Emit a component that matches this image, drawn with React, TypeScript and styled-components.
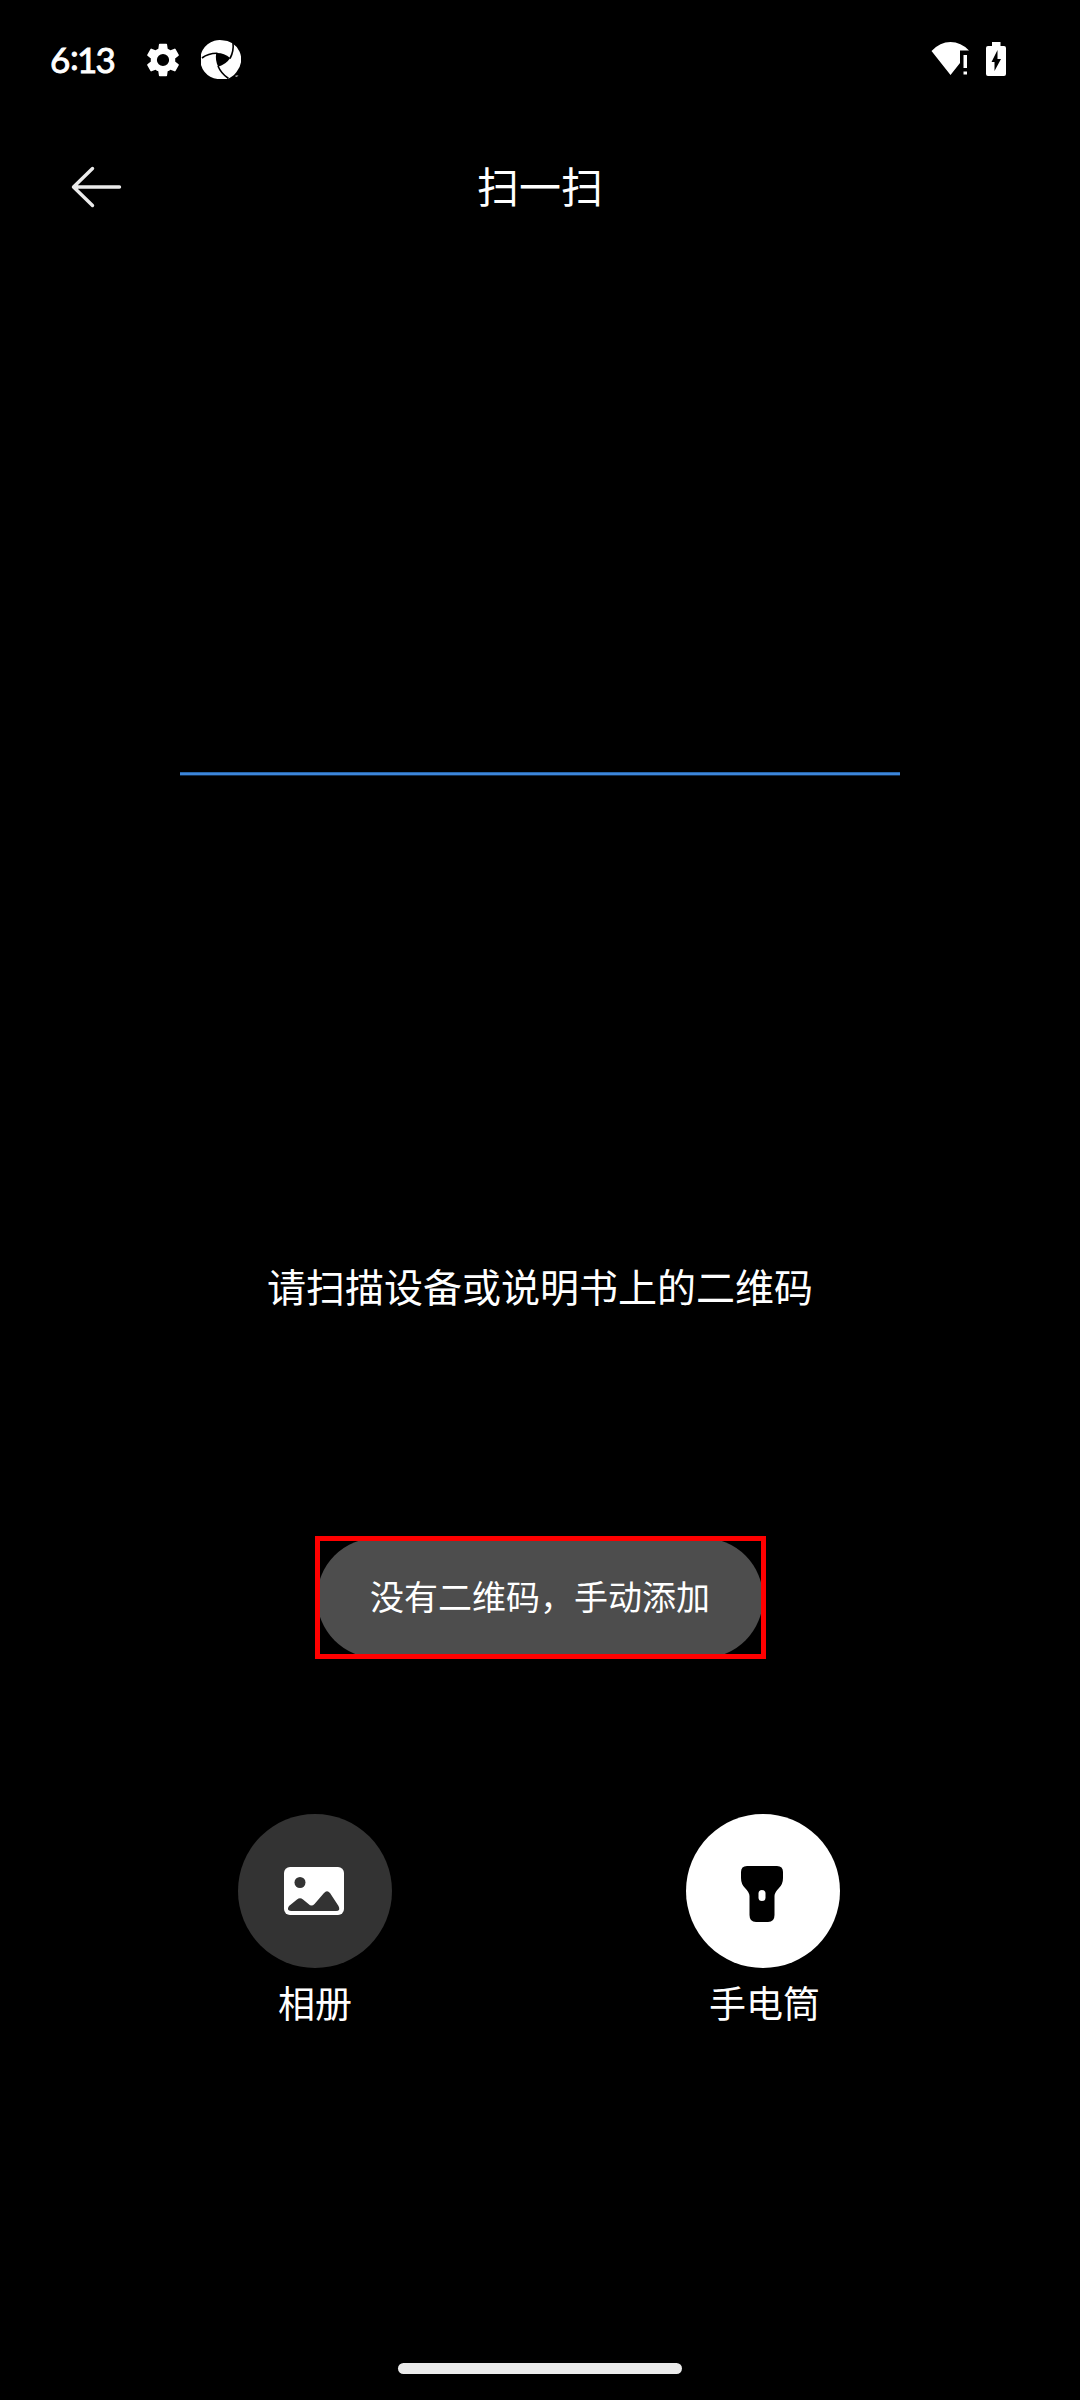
import React from "react";
import styled, { createGlobalStyle } from "styled-components";

const GlobalStyle = createGlobalStyle`
  * { box-sizing: border-box; }
  body { margin: 0; background: #000; }
`;

const Screen = styled.main`
  width: 1080px;
  height: 2400px;
  display: flex;
  flex-direction: column;
  align-items: center;
  background: #000;
  color: #fff;
  overflow: hidden;
  font-family: "Noto Sans CJK SC", sans-serif;
`;

const StatusBar = styled.div`
  width: 100%;
  height: 120px;
  flex: none;
  padding: 0 73px 0 50px;
  display: flex;
  justify-content: space-between;
`;

const StatusGroup = styled.div<{ $gap: number; $height: number }>`
  display: flex;
  align-items: center;
  height: ${(p) => p.$height}px;
  gap: ${(p) => p.$gap}px;
`;

const Clock = styled.time`
  display: flex;
  width: 75px;
  padding-bottom: 2px;
  font: 400 35px/40px Lato, sans-serif;
  letter-spacing: -1.8px;
  -webkit-text-stroke: 0.9px #fff;
`;

const Colon = styled.span`
  margin: -3px 0 0 1.5px;
`;

const Header = styled.header`
  width: 100%;
  height: 132px;
  flex: none;
  display: grid;
  grid-template-columns: 71px 1fr 71px;
  align-items: center;
`;

const BackButton = styled.button`
  width: 52px;
  height: 42px;
  margin: 1px 0 0 71px;
  padding: 0;
  border: 0;
  background: none;
`;

const Title = styled.h1`
  margin: 0;
  padding-bottom: 2px;
  font-size: 42px;
  font-weight: 400;
  line-height: 60px;
  text-align: center;
`;

const ScanArea = styled.section`
  width: 720px;
  flex: none;
  display: flex;
  flex-direction: column;
  align-items: center;
`;

const ScanLine = styled.div`
  width: 720px;
  height: 4px;
  margin-top: 520px;
  background: linear-gradient(#2765a8 0 1px, #3d86da 1px 3px, #122f50 3px 4px);
`;

const Hint = styled.p`
  margin: 481px 0 0;
  font-size: 39px;
  line-height: 56px;
  white-space: nowrap;
`;

const Highlight = styled.div`
  width: 451px;
  height: 123px;
  flex: none;
  margin-top: 223px;
  border: 5px solid #f00;
  display: flex;
  align-items: center;
  justify-content: center;
  overflow: hidden;
`;

const ManualButton = styled.button`
  flex: none;
  width: 446px;
  height: 120px;
  padding: 0 0 4px;
  border: 0;
  border-radius: 60px;
  background: #4d4d4d;
  color: #fff;
  font: 400 34px/50px "Noto Sans CJK SC", sans-serif;
`;

const Actions = styled.div`
  display: flex;
  gap: 248px;
  margin: 155px 2px 0 0;
`;

const Action = styled.div`
  width: 200px;
  display: flex;
  flex-direction: column;
  align-items: center;
`;

const Disc = styled.div<{ $color: string; $pad?: string }>`
  width: 154px;
  height: 154px;
  padding: ${(p) => p.$pad ?? "0"};
  border-radius: 50%;
  display: flex;
  align-items: center;
  justify-content: center;
  background: ${(p) => p.$color};
`;

const Label = styled.span<{ $indent?: number }>`
  margin-top: 7px;
  padding-left: ${(p) => p.$indent ?? 0}px;
  font-size: 37px;
  line-height: 54px;
`;

const HomeBar = styled.div`
  width: 284px;
  height: 11px;
  flex: none;
  margin-top: auto;
  margin-bottom: 26px;
  border-radius: 6px;
  background: #ebebeb;
`;

const GearIcon = () => (
  <svg width="34" height="34" viewBox="2.2 2 19.6 20" fill="#fff">
    <path d="M19.14 12.94c.04-.3.06-.61.06-.94 0-.32-.02-.64-.07-.94l2.03-1.58a.49.49 0 0 0 .12-.61l-1.92-3.32a.49.49 0 0 0-.59-.22l-2.39.96c-.5-.38-1.03-.7-1.62-.94l-.36-2.54a.48.48 0 0 0-.48-.41h-3.84c-.24 0-.43.17-.47.41l-.36 2.54c-.59.24-1.13.57-1.62.94l-2.39-.96a.48.48 0 0 0-.59.22L2.74 8.87c-.12.21-.08.47.12.61l2.03 1.58c-.05.3-.09.63-.09.94s.02.64.07.94l-2.03 1.58a.49.49 0 0 0-.12.61l1.92 3.32c.12.22.37.29.59.22l2.39-.96c.5.38 1.03.7 1.62.94l.36 2.54c.05.24.24.41.48.41h3.84c.24 0 .44-.17.47-.41l.36-2.54c.59-.24 1.13-.56 1.62-.94l2.39.96c.22.08.47 0 .59-.22l1.92-3.32a.48.48 0 0 0-.12-.61zM12 15.6A3.6 3.6 0 1 1 12 8.4a3.6 3.6 0 0 1 0 7.2z" />
  </svg>
);

const ShutterIcon = () => (
  <svg width="40" height="40" viewBox="-1.5 0 40 40">
    <path d="M19.500.2A19.200 19.200 0 0 1 34 32Q32 35 29 36.800L25.500 39H15A19.200 19.200 0 0 1 19.500.2Z" fill="#fff" />
    <path d="M13.700 13Q21 12.500 27.700 18Q23.500 24.500 15.700 26.700Q12.500 20.500 13.700 13Z" fill="#000" />
    <path d="M-.5 18Q6 13 15 13.200M30.500 3Q31.500 11 27.500 18.500M15.500 26Q18.500 33.500 26 38.500" fill="none" stroke="#000" strokeWidth="1.600" />
    <path d="M33 35.500H36L34.500 36.800H33Z" fill="#ccc" />
  </svg>
);

const WifiIcon = () => (
  <svg width="39" height="34" viewBox="0 0 39 34" fill="#fff">
    <path d="M.5 9Q9 0 19.500 0T38 8.500H29V21L19.500 33Z" />
    <path d="M32.500 13H36V26H32.500ZM32.500 29.500H36V32.500H32.500Z" />
  </svg>
);

const BatteryIcon = () => (
  <svg width="21" height="34" viewBox="0 0 21 34">
    <path d="M6 0H14.500V4H18Q20 4 20 6V32Q20 34 18 34H2Q0 34 0 32V6Q0 4 2 4H6Z" fill="#fff" />
    <path d="M11.500 8V17H15L8.500 29V20H5.500Z" fill="#000" />
  </svg>
);

const ArrowIcon = () => (
  <svg width="52" height="42" viewBox="0 0 52 42" fill="none" stroke="#ebebeb" strokeWidth="3.4" strokeLinecap="round" strokeLinejoin="round">
    <path d="M21.500 2.500L2.500 21L21.500 39.500M3 21H48.500" />
  </svg>
);

const PhotoIcon = () => (
  <svg width="60" height="48" viewBox="0 0 60 48">
    <rect width="60" height="48" rx="6" fill="#fff" />
    <circle cx="16" cy="15.500" r="5.500" fill="#333" />
    <path d="M5 39L13 32.500Q16 30 19 32.500L24.500 37Q27.500 40 30.500 37L40 26Q43 22.500 46 26L54.500 39Q57 44 52 44H7Q2 43.500 5 39Z" fill="#333" />
  </svg>
);

const TorchIcon = () => (
  <svg width="42" height="56" viewBox="0 0 42 56">
    <path d="M6 0H36Q42 0 42 6V12Q42 18 38 22Q33.500 26.500 33.500 30V49Q33.500 56 27 56H15Q8.500 56 8.500 49V30Q8.500 26.500 4 22Q0 18 0 12V6Q0 0 6 0Z" fill="#000" />
    <rect x="17.500" y="24" width="7" height="11" rx="3.500" fill="#fff" />
  </svg>
);

export default function App() {
  return (
    <Screen>
      <GlobalStyle />
      <StatusBar>
        <StatusGroup $gap={21} $height={120}>
          <Clock>6<Colon>:</Colon>13</Clock>
          <GearIcon />
          <ShutterIcon />
        </StatusGroup>
        <StatusGroup $gap={16} $height={118}>
          <WifiIcon />
          <BatteryIcon />
        </StatusGroup>
      </StatusBar>
      <Header>
        <BackButton aria-label="返回"><ArrowIcon /></BackButton>
        <Title>扫一扫</Title>
      </Header>
      <ScanArea>
        <ScanLine />
        <Hint>请扫描设备或说明书上的二维码</Hint>
      </ScanArea>
      <Highlight>
        <ManualButton>没有二维码，手动添加</ManualButton>
      </Highlight>
      <Actions>
        <Action>
          <Disc $color="#333" $pad="0 2px 0 0"><PhotoIcon /></Disc>
          <Label>相册</Label>
        </Action>
        <Action>
          <Disc $color="#fff" $pad="6px 2px 0 0"><TorchIcon /></Disc>
          <Label $indent={3}>手电筒</Label>
        </Action>
      </Actions>
      <HomeBar />
    </Screen>
  );
}
